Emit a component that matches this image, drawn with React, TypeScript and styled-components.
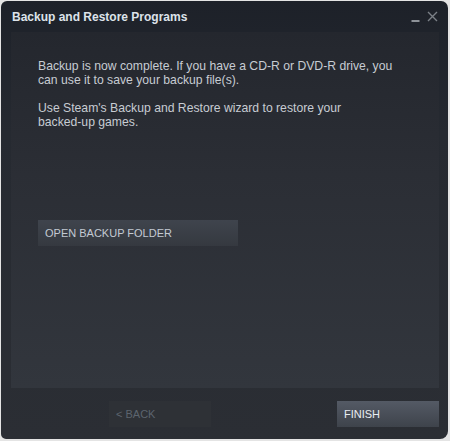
import React from "react";
import styled, { createGlobalStyle } from "styled-components";

const Global = createGlobalStyle`
  html, body { margin: 0; padding: 0; background: #e4e4e4; }
  body { font-family: "Liberation Sans", Arial, sans-serif; }
  * { box-sizing: border-box; }
`;

const Window = styled.div`
  margin: 1px 0 0 1px;
  width: 447px;
  height: 438px;
  border-radius: 6px 7px 8px 5px;
  background: linear-gradient(180deg, #1d2129 0%, #262a31 30%, #2b2e34 100%);
  display: flex;
  flex-direction: column;
  overflow: hidden;
`;

const TitleBar = styled.div`
  height: 31px;
  display: flex;
  align-items: flex-start;
  justify-content: space-between;
  padding: 9px 10px 0 11px;
`;

const Title = styled.div`
  font-size: 12px;
  font-weight: bold;
  color: #dde3ea;
  line-height: 14px;
`;

const Controls = styled.div`
  display: flex;
  align-items: flex-start;
  gap: 6px;
  padding-top: 1px;
`;

const Panel = styled.div`
  margin: 0 9px 0 10px;
  height: 356px;
  background: linear-gradient(180deg, #24272e 0%, #2b2e35 40%, #32363d 100%);
  padding: 27px 20px 0 27px;
  display: flex;
  flex-direction: column;
`;

const Para = styled.p`
  margin: 0 0 14px 0;
  font-size: 12.2px;
  line-height: 14px;
  color: #c7ccd3;
`;

const PanelButton = styled.button`
  margin-top: 77px;
  width: 200px;
  height: 26px;
  border: none;
  text-align: left;
  padding: 0 7px;
  font-family: "Liberation Sans", Arial, sans-serif;
  font-size: 11px;
  color: #c3cad3;
  background: linear-gradient(180deg, #3f444d 0%, #353940 100%);
`;

const Footer = styled.div`
  flex: 1;
  display: flex;
  justify-content: space-between;
  padding: 13px 9px 0 108px;
`;

const FooterButton = styled.button<{ $primary?: boolean }>`
  width: 102px;
  height: 26px;
  border: none;
  text-align: left;
  padding: 0 7px;
  font-family: "Liberation Sans", Arial, sans-serif;
  font-size: 11px;
  color: ${(p) => (p.$primary ? "#e9edf2" : "#5c646e")};
  background: ${(p) =>
    p.$primary
      ? "linear-gradient(180deg, #545a65 0%, #3e434b 100%)"
      : "#2e3136"};
`;

export default function App() {
  return (
    <>
      <Global />
      <Window>
        <TitleBar>
          <Title>Backup and Restore Programs</Title>
          <Controls>
            <svg width="10" height="12" viewBox="0 0 10 12">
              <rect x="0.5" y="9" width="8" height="2" fill="#8d9298" />
            </svg>
            <svg width="11" height="11" viewBox="0 0 11 11">
              <path d="M1 1 L10 10 M10 1 L1 10" stroke="#7b8087" strokeWidth="1.4" />
            </svg>
          </Controls>
        </TitleBar>
        <Panel>
          <Para>
            Backup is now complete. If you have a CD-R or DVD-R drive, you
            <br />
            can use it to save your backup file(s).
          </Para>
          <Para>
            Use Steam's Backup and Restore wizard to restore your
            <br />
            backed-up games.
          </Para>
          <div>
            <PanelButton>OPEN BACKUP FOLDER</PanelButton>
          </div>
        </Panel>
        <Footer>
          <FooterButton>&lt; BACK</FooterButton>
          <FooterButton $primary>FINISH</FooterButton>
        </Footer>
      </Window>
    </>
  );
}
